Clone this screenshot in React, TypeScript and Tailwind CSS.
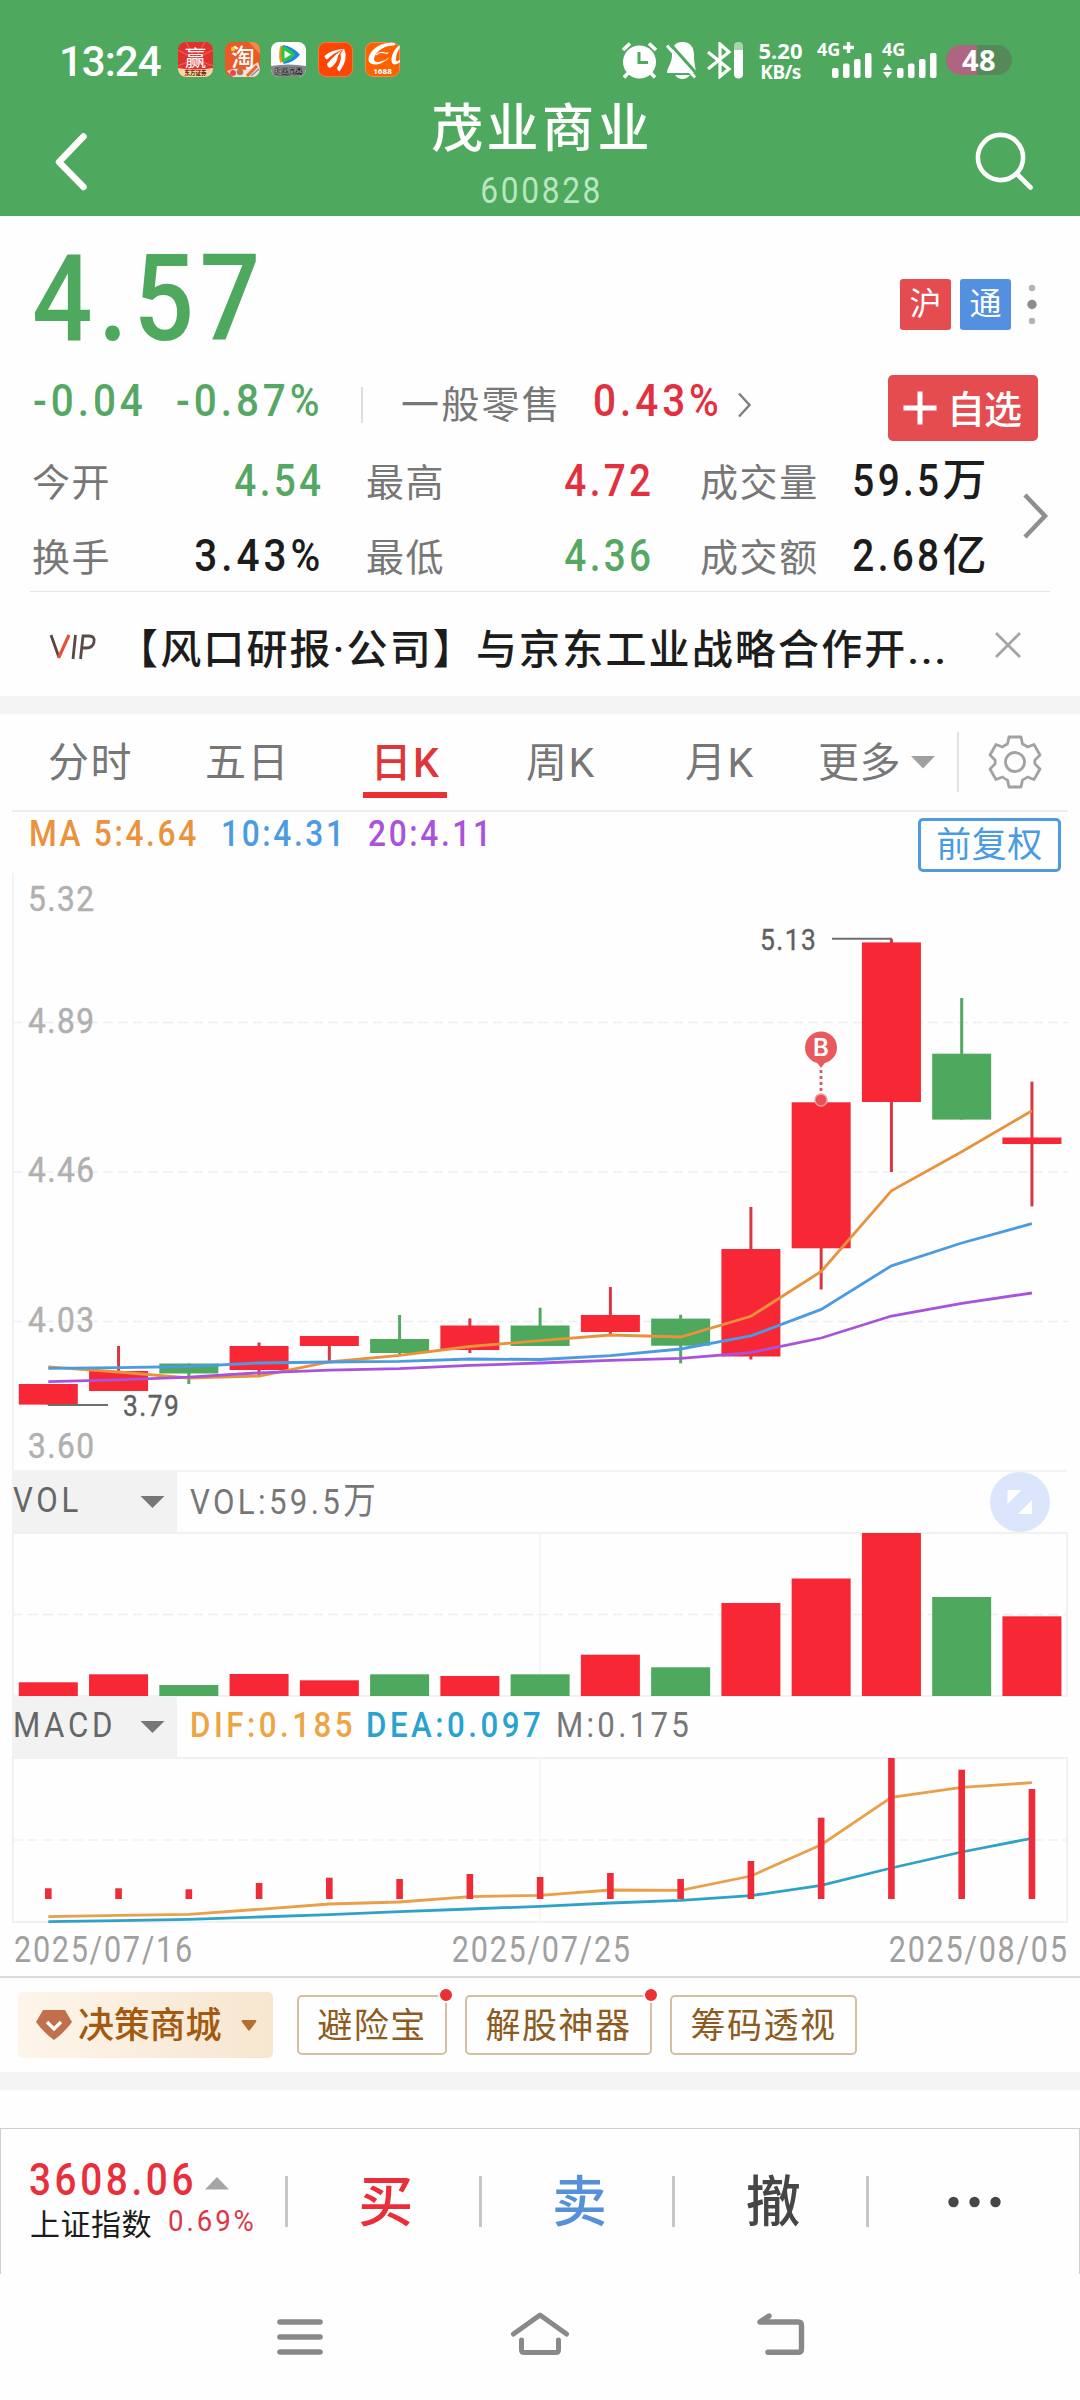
import React from "react";

const RED = "#f72735";
const GREEN = "#4ea95e";
const UI_FONT = "font-['Roboto','Noto_Sans_CJK_SC',sans-serif]";

type Candle = { up: boolean; top: number; bottom: number; high?: number; low?: number; vol: number };

// Pixel levels in chart space, one entry per trading day.
const candles: Candle[] = [
  { up: true, top: 1384, bottom: 1404.6, vol: 1682.3 },
  { up: true, top: 1371, bottom: 1391, high: 1346, vol: 1674.3 },
  { up: false, top: 1363.5, bottom: 1373.5, low: 1384, vol: 1685 },
  { up: true, top: 1346, bottom: 1370, high: 1342.5, low: 1377, vol: 1674 },
  { up: true, top: 1336, bottom: 1346, low: 1361, vol: 1680.3 },
  { up: false, top: 1339, bottom: 1353, high: 1315, low: 1355, vol: 1674.3 },
  { up: true, top: 1325.5, bottom: 1350, high: 1318.4, low: 1353, vol: 1676 },
  { up: false, top: 1325.5, bottom: 1346, high: 1307.7, vol: 1674.3 },
  { up: true, top: 1315, bottom: 1332, high: 1287, low: 1334, vol: 1654.7 },
  { up: false, top: 1318.6, bottom: 1345.7, high: 1314.8, low: 1363.4, vol: 1667.3 },
  { up: true, top: 1249, bottom: 1356.5, high: 1207, low: 1359.5, vol: 1603 },
  { up: true, top: 1102.3, bottom: 1248.3, low: 1289.5, vol: 1578.5 },
  { up: true, top: 942.4, bottom: 1102, high: 939, low: 1172, vol: 1533 },
  { up: false, top: 1053.7, bottom: 1119.6, high: 998, vol: 1597 },
  { up: true, top: 1137.5, bottom: 1144, high: 1081.7, low: 1206.4, vol: 1616.3 },
];
const ma5 = [1366.9, 1372, 1378, 1376, 1362, 1355.4, 1346.5, 1340.6, 1335, 1337, 1316.3, 1271.5, 1190.8, 1151.7, 1110.8];
const ma10 = [1368.4, 1367.6, 1366.5, 1363, 1362, 1361.3, 1359, 1359.5, 1355.7, 1349, 1335.8, 1309.4, 1265.8, 1243, 1223.7];
const ma20 = [1381.7, 1379.8, 1377.2, 1372.8, 1370.2, 1368.7, 1365.4, 1363, 1360.3, 1358.4, 1352.6, 1338, 1316, 1303.3, 1293];
const macdTops = [1888.3, 1888.3, 1889.3, 1883, 1877.7, 1879, 1874, 1877, 1873, 1879, 1861, 1817.7, 1758, 1769.7, 1789];
const dif = [1916.7, 1915.3, 1914.3, 1909.3, 1904, 1902, 1896.7, 1895.3, 1890, 1890.3, 1876, 1844.7, 1797.3, 1787.3, 1782.7];
const dea = [1921.7, 1920.7, 1919.3, 1917, 1914.7, 1911.7, 1909, 1906.3, 1903, 1900.3, 1895.7, 1885.3, 1868, 1852, 1838.3];

const cx = (i: number) => 48.3 + i * 70.26;
const line = (ys: number[]) => ys.map((y, i) => `${cx(i).toFixed(1)},${y}`).join(" ");

// Narrow, widely spaced figures used for every quote value.
function Num({ children, className = "origin-left" }: { children: React.ReactNode; className?: string }) {
  return <span className={`inline-block scale-x-[0.88] ${className}`}>{children}</span>;
}

// Percentages and signed changes are set a little wider.
function Pct({ children, className = "origin-left" }: { children: React.ReactNode; className?: string }) {
  return <span className={`inline-block scale-x-[0.92] tracking-[4.300px] ${className}`}>{children}</span>;
}

function StatusBar() {
  return (
    <div className="flex h-[78px] items-start pt-[42px] text-white">
      <div className="ml-[59px] w-[119px] text-[42px] font-medium leading-[40px] tracking-[-1px]">13:24</div>
      <div className="flex w-[443px] gap-[11.7px]">
        <svg width="35" height="35" viewBox="0 0 35 35">
          <rect width="35" height="35" rx="8" fill="#e2302f" />
          <path d="M0 8 L17 17 L8 0 M27 0 L17 17 L35 8 M0 24 L17 17 L35 24" stroke="#ef5c52" strokeWidth="1.200" fill="none" />
          <path d="M0 26 Q17 29 35 26 V27 A8 8 0 0 1 27 35 H8 A8 8 0 0 1 0 27Z" fill="#f8d6a8" />
          <text x="17.500" y="23.500" textAnchor="middle" fontSize="21.500" fontFamily="Noto Sans CJK SC" fill="#fff">赢</text>
          <text x="17.500" y="33.300" textAnchor="middle" fontSize="5.500" fontWeight="900" fontFamily="Noto Sans CJK SC" fill="#7a2a10">东方证券</text>
        </svg>
        <svg className="overflow-visible" width="35" height="35" viewBox="0 0 35 35">
          <rect width="35" height="35" rx="8" fill="#ea5a26" />
          <path d="M24 0 H27 A8 8 0 0 1 35 8 V12 Z" fill="#f08a4c" />
          <path d="M2 29 Q10 25 20 28 L33 20 L35 27 A8 8 0 0 1 27 35 H8 Z" fill="#f6ddd0" />
          <circle cx="8" cy="31" r="3" fill="#e84460" />
          <circle cx="15" cy="30" r="3.200" fill="#b4744c" />
          <path d="M22 34 L32 24" stroke="#e8662c" strokeWidth="3" />
          <path d="M26 34 L34 27" stroke="#6d8fd0" strokeWidth="1.500" />
          <text x="18" y="23.500" textAnchor="middle" fontSize="23.500" fontWeight="500" fontFamily="Noto Sans CJK SC" fill="#fff">淘</text>
          <circle cx="8" cy="7" r="2.200" fill="#ffc93a" />
        </svg>
        <svg width="35" height="35" viewBox="0 0 35 35">
          <rect width="35" height="35" rx="8" fill="#fff" />
          <path d="M0 24 Q17 21 35 24 V27 A8 8 0 0 1 27 35 H8 A8 8 0 0 1 0 27Z" fill="#85898b" />
          <path d="M9.500 3.500 Q7 12 9 20.500 L15 20 L13 4Z" fill="#ff8a1e" />
          <path d="M12 3 Q21 4 29 12.500 Q24 20 12.500 22 Q10 13 12 3Z" fill="#1f86e8" />
          <path d="M11 4 Q19 6 24 12.500 Q20 18 12 20.500 Q9 12 11 4Z" fill="#27c840" />
          <path d="M13.500 8.500 L20 12.500 L13.500 16.500Z" fill="#fff" />
          <text x="17.500" y="32" textAnchor="middle" fontSize="7" fontWeight="900" fontFamily="Noto Sans CJK SC" fill="#fff" stroke="#161616" strokeWidth="0.500">扫黑风暴</text>
        </svg>
        <svg width="35" height="35" viewBox="0 0 35 35">
          <rect x="0.500" y="0.500" width="34" height="34" rx="7.500" fill="#fe4503" stroke="#f47a3c" />
          <path d="M26 7 Q12 8 6.500 14 Q6.500 17 9 17.800 Q15 11 26 7Z M26 7 Q17 12 9 22 Q9.500 25.500 12 26 Q19 22 20 14 Q22 9.500 26 7Z M26 6.500 Q31 17 21.500 29.500 Q19 28.500 19 26 Q24 19 22.500 12Z" fill="#fff" />
        </svg>
        <svg width="35" height="35" viewBox="0 0 35 35">
          <rect x="0.500" y="0.500" width="34" height="34" rx="7.500" fill="#ff6000" stroke="#f48a4c" />
          <path d="M20 1.500 Q12 3 7 9 Q3 14 3.500 18.500 Q5 23 12 22.500 Q19 21 25 15 Q20 19 14 20 Q9 20.500 9 17 Q10 10 20 5 Q25 3 29 3.500 Q32 2 29 1 Q25 0.500 20 1.500Z" fill="#fff" />
          <path d="M11 13 Q15 9 20 11 Q22 12 23 10.500" fill="none" stroke="#fff" strokeWidth="1.300" />
          <path d="M34.500 3 Q28 8 26.500 16 Q26 22 29.500 22.500 Q32 22.500 35 20 V18 Q32 20 31 18.500 Q30.500 12 34.800 6Z" fill="#fff" />
          <text x="17.500" y="32" textAnchor="middle" fontSize="8" fontWeight="900" fontFamily="Roboto" fill="#fff">1688</text>
        </svg>
      </div>
      <svg className="w-[38px] shrink-0" height="37" viewBox="0 0 38 37">
        <circle cx="18.500" cy="20" r="16.500" fill="#fff" />
        <path d="M2 8 L9 1.500 M35 8 L28 1.500 M3 35.500 L8 30 M34 35.500 L29 30" stroke="#fff" strokeWidth="3.500" />
        <path d="M18 10 V20.500 H27" fill="none" stroke={GREEN} strokeWidth="3" />
      </svg>
      <svg className="ml-[7px] w-[33px] shrink-0" height="37" viewBox="-1 0 33 37">
        <path d="M15.500 0 C7 0 5 6 5 13 C5 22 0 25 0 31 H29 C29 27 27 22 27 13 C27 6 24 0 15.500 0Z" fill="#fff" />
        <path d="M8 33 H23 Q20 37 15.500 37 Q11 37 8 33Z" fill="#fff" />
        <path d="M2 0.500 L33 35.500" stroke={GREEN} strokeWidth="3" />
        <path d="M0 3.500 L28 35.500" stroke="#fff" strokeWidth="3" />
      </svg>
      <svg className="ml-[8px] w-[37px] shrink-0" height="37" viewBox="0 0 37 37">
        <path d="M1 10 L22 27 L13 34.500 V2 L22 10 L1 27" fill="none" stroke="#fff" strokeWidth="3.200" />
        <rect x="27" y="0" width="9" height="36" rx="4" fill="#a5d5ac" />
        <path d="M27 8 H36 V32 A4 4 0 0 1 27 32Z" fill="#fff" />
      </svg>
      <div className="ml-[8px] w-[57px] text-center font-['Noto_Sans',sans-serif] font-bold">
        <div className="text-[22px] leading-[16px]">5.20</div>
        <div className="mt-[6px] text-[19px] leading-[17px] tracking-[-0.600px]">KB/s</div>
      </div>
      <svg className="ml-[9px] w-[120px] shrink-0 overflow-visible font-['Noto_Sans',sans-serif]" height="37" viewBox="0 0 120 37" fill="#fff">
        <text x="-1" y="13.500" fontSize="18" fontWeight="700">4G</text>
        <path d="M25 5.500 H36 M30.500 0 V11" stroke="#fff" strokeWidth="3.400" />
        <rect x="14" y="26" width="6.500" height="10" rx="2" />
        <rect x="25" y="21.500" width="6.500" height="14.500" rx="2" />
        <rect x="36" y="17" width="6.500" height="19" rx="2" />
        <rect x="47" y="11" width="6.500" height="25" rx="2" />
        <text x="64" y="13.500" fontSize="18" fontWeight="700">4G</text>
        <path d="M65 28 L69.500 22 L74 28Z M65 30 L69.500 36 L74 30Z" />
        <rect x="79" y="26" width="6.500" height="10" rx="2" />
        <rect x="90" y="21.500" width="6.500" height="14.500" rx="2" />
        <rect x="101" y="17" width="6.500" height="19" rx="2" />
        <rect x="112" y="11" width="6.500" height="25" rx="2" />
      </svg>
      <div className="ml-[8px] mt-[3px] h-[30px] w-[66px] shrink-0 rounded-full bg-linear-to-r from-[#ad6580] from-[47%] to-[#56895a] to-[47%] text-center font-['Noto_Sans',sans-serif] text-[29px] font-bold leading-[30px] tracking-[0.500px]">
        48
      </div>
    </div>
  );
}

function Header() {
  return (
    <header className="h-[216px] bg-[#4ea95e] text-white">
      <StatusBar />
      <div className="flex h-[138px] justify-between">
        <svg className="ml-[50px] mt-[50px]" width="60" height="68" viewBox="0 0 60 68">
          <path d="M33.500 8.500 L9 34 L33.500 59" fill="none" stroke="#fff" strokeWidth="6.500" strokeLinecap="round" strokeLinejoin="round" />
        </svg>
        <div className="flex w-[300px] flex-col items-center pt-[22px]">
          <div className="pl-[4px] text-[52px] font-medium leading-[60px] tracking-[3.400px]">茂业商业</div>
          <div className="mt-[11px] pl-[4px] text-[36px] leading-[40px] tracking-[3px] text-[#b9e6c0]">
            <span className="inline-block scale-x-[0.88]">600828</span>
          </div>
        </div>
        <svg className="mr-[34px] mt-[50px]" width="76" height="68" viewBox="-8 0 76 68">
          <circle cx="22.500" cy="29.500" r="22.600" fill="none" stroke="#fff" strokeWidth="4.600" />
          <path d="M39 46 L52.500 59.500" stroke="#fff" strokeWidth="4.600" strokeLinecap="round" />
        </svg>
      </div>
    </header>
  );
}

function Quote() {
  const label = "pt-[5px] text-[38px] tracking-[1.600px] text-[#777777]";
  const value = "pt-[3px] text-right text-[44px] font-medium tracking-[3.800px]";
  return (
    <section className="h-[376px]">
      <div className="flex h-[159px] justify-between">
        <div className="ml-[32px] pt-[7px] text-[121px] font-medium leading-[152px] tracking-[6.500px] text-[#4ea95e]">
          <Num>4.57</Num>
        </div>
        <div className="mr-[41px] flex gap-[9px] pt-[63px] text-[32px] leading-[51px] text-white">
          <div className="h-[51px] w-[51px] rounded-[3px] bg-[#e44c50] text-center">沪</div>
          <div className="h-[51px] w-[51px] rounded-[3px] bg-[#5390df] text-center">通</div>
          <svg className="ml-[7px]" width="12" height="51" viewBox="0 0 12 51">
            <circle cx="5" cy="9" r="3.200" fill="#b4b4b4" />
            <circle cx="5" cy="25.500" r="4.700" fill="#8c8c8c" />
            <circle cx="5" cy="42" r="3.200" fill="#b4b4b4" />
          </svg>
        </div>
      </div>
      <div className="flex h-[66px] items-start whitespace-nowrap text-[44px] font-medium leading-[52px] text-[#55a864]">
        <div className="ml-[33px] w-[143px]"><Pct>-0.04</Pct></div>
        <div className="w-[185px]"><Pct>-0.87%</Pct></div>
        <div className="mt-[12px] h-[36px] w-[2px] bg-[#dddddd]" />
        <div className="ml-[38px] w-[192px] pt-[4px] text-[38px] font-normal tracking-[2.200px] text-[#777777]">一般零售</div>
        <div className="w-[144px] text-[#e2303f]"><Pct>0.43%</Pct></div>
        <svg className="mt-[17px]" width="16" height="26" viewBox="0 0 16 26">
          <path d="M2 1.500 L12.500 13 L2 24.500" fill="none" stroke="#808080" strokeWidth="2.500" />
        </svg>
        <div className="ml-auto mr-[42px] flex h-[66px] w-[150px] items-center rounded-[5px] bg-[#e44c50] text-[38px] font-medium tracking-[-1px] text-white">
          <svg className="ml-[15px]" width="34" height="34" viewBox="0 0 34 34">
            <path d="M0.500 17 H33.500 M17 0.500 V33.500" stroke="#fff" strokeWidth="5" />
          </svg>
          <span className="ml-[10px] pt-[3px]">自选</span>
        </div>
      </div>
      <div className="flex h-[150px]">
        <div className="grid w-[1020px] shrink-0 grid-cols-[120px_172px_42px_120px_168px_46px_140px_146px] grid-rows-[75px_75px] whitespace-nowrap pl-[32px] leading-[75px]">
          <span className={label}>今开</span>
          <span className={`${value} text-[#55a864]`}><Num className="origin-right">4.54</Num></span>
          <i />
          <span className={label}>最高</span>
          <span className={`${value} text-[#e2303f]`}><Num className="origin-right">4.72</Num></span>
          <i />
          <span className={label}>成交量</span>
          <span className={`${value} text-[#1c1c1c]`}><Num className="origin-right">59.5</Num><span className="tracking-[0px]">万</span></span>
          <span className={label}>换手</span>
          <span className={`${value} text-[#1c1c1c]`}><Pct className="origin-right">3.43%</Pct></span>
          <i />
          <span className={label}>最低</span>
          <span className={`${value} text-[#55a864]`}><Num className="origin-right">4.36</Num></span>
          <i />
          <span className={label}>成交额</span>
          <span className={`${value} text-[#1c1c1c]`}><Num className="origin-right">2.68</Num><span className="tracking-[0px]">亿</span></span>
        </div>
        <svg className="mt-[50px]" width="30" height="50" viewBox="0 0 30 50">
          <path d="M5 4 L25 25 L5 46" fill="none" stroke="#8f8f8f" strokeWidth="4.500" />
        </svg>
      </div>
      <div className="mx-[30px] h-[1px] bg-[#e6e6e6]" />
    </section>
  );
}

function VipNews() {
  return (
    <div className="flex h-[104px] items-start whitespace-nowrap">
      <svg className="ml-[49px] mt-[42px]" width="48" height="26" viewBox="0 0 48 26" fill="none" strokeWidth="2.800">
        <path d="M2 1 L10 23.500" stroke="#5a4640" />
        <path d="M9.500 24 L20 1" stroke="#e0553a" strokeWidth="3.200" />
        <path d="M26.500 1 L24 25 M31.500 25 L34 2 H40 Q46 2 45 8 Q44 14 37 14 H33.500" stroke="#5a4a46" />
      </svg>
      <div className="ml-[20px] w-[859px] pt-[30px] text-[41px] font-medium leading-[56px] tracking-[2.150px] text-[#1c1c1c]">
        【风口研报·公司】与京东工业战略合作开...
      </div>
      <svg className="ml-[19px] mt-[40px]" width="26" height="26" viewBox="0 0 26 26">
        <path d="M1 1 L25 25 M25 1 L1 25" stroke="#a6a6a6" strokeWidth="2.800" />
      </svg>
    </div>
  );
}

function Tabs() {
  return (
    <div className="flex h-[96px] whitespace-nowrap text-[41px] leading-[98px] tracking-[1.500px] text-[#777777]">
      <div className="ml-[48px] w-[157px]">分时</div>
      <div className="w-[158px]">五日</div>
      <div className="flex w-[163px] flex-col text-[#e0363a]">
        <div className="h-[78px] w-[84px] pl-[1px] text-center font-medium">日K</div>
        <div className="h-[6px] w-[84px] bg-[#e93032]" />
      </div>
      <div className="w-[159px]">周K</div>
      <div className="w-[133px]">月K</div>
      <div className="w-[92px] tracking-[0.500px]">更多</div>
      <svg className="mt-[42px]" width="26" height="13" viewBox="0 0 26 13">
        <path d="M1 0 H25 L13 12.500Z" fill="#a0a0a0" />
      </svg>
      <div className="ml-[21px] mt-[18px] h-[60px] w-[2px] bg-[#e2e2e2]" />
      <svg className="ml-[29px] mt-[21px]" width="54" height="54" viewBox="0 0 54 54" fill="none" stroke="#a2a2a2" strokeWidth="2.800" strokeLinejoin="round">
        <path d="M21 2 H33 L34.500 9 Q37 10 39.500 12 L46 9.500 L52 20 L47 25 Q46.500 27 47 29 L52 34 L46 44.500 L39.500 42 Q37 44 34.500 45 L33 52 H21 L19.500 45 Q17 44 14.500 42 L8 44.500 L2 34 L7 29 Q7.500 27 7 25 L2 20 L8 9.500 L14.500 12 Q17 10 19.500 9Z" />
        <circle cx="27" cy="27" r="9.500" />
      </svg>
    </div>
  );
}

function MaLegend() {
  return (
    <div className="mx-[12px] flex h-[63px] items-start whitespace-nowrap border-t-2 border-[#eeeeee] text-[36px] font-medium leading-[45px] tracking-[3px]">
      <div className="ml-[17px] w-[192px] text-[#ea923c]"><Num>MA 5:4.64</Num></div>
      <div className="w-[147px] text-[#4b9be2]"><Num>10:4.31</Num></div>
      <div className="w-[200px] text-[#a953dc]"><Num>20:4.11</Num></div>
      <div className="ml-auto mr-[7px] mt-[6px] h-[54px] w-[143px] rounded-[5px] border-[3px] border-[#509be0] text-center text-[35px] font-normal leading-[49px] tracking-[0.500px] text-[#4b9be2]">
        前复权
      </div>
    </div>
  );
}

function CandleChart() {
  const labels: [string, number][] = [["5.32", 911], ["4.89", 1033], ["4.46", 1182], ["4.03", 1332], ["3.60", 1458]];
  return (
    <svg className="block" width="1080" height="599" viewBox="0 873 1080 599" fontFamily="Roboto">
      <path d="M13 873 V1471 H1067" fill="none" stroke="#f3f3f3" strokeWidth="2" />
      {[1022.5, 1172, 1321.5].map((y) => (
        <path key={y} d={`M13 ${y} H1068`} stroke="#eeeeee" strokeWidth="1.500" strokeDasharray="10 5" />
      ))}
      {labels.map(([t, y]) => (
        <text key={t} transform={`translate(28 ${y}) scale(0.88 1)`} fontSize="36" letterSpacing="1.600" fill="#b0b0b0" stroke="#b0b0b0" strokeWidth="0.500">{t}</text>
      ))}
      {candles.map((c, i) => (
        <g key={i} fill={c.up ? RED : GREEN}>
          <rect x={cx(i) - 1.5} y={c.high ?? c.top} width="3" height={(c.low ?? c.bottom) - (c.high ?? c.top)} fill={c.up ? "#d73844" : "#55a864"} />
          <rect x={cx(i) - 29.500} y={c.top} width="59" height={c.bottom - c.top} />
        </g>
      ))}
      <g fill="none" strokeWidth="2.800">
        <polyline points={line(ma5)} stroke="#e8933c" />
        <polyline points={line(ma10)} stroke="#4b9be2" />
        <polyline points={line(ma20)} stroke="#a953dc" />
      </g>
      <path d="M48 1405 H108 M832 938.800 H892" stroke="#6e6e6e" strokeWidth="2" />
      <g fontSize="30" fill="#606060" letterSpacing="1.700" stroke="#606060" strokeWidth="0.400">
        <text transform="translate(123 1416) scale(0.88 1)">3.79</text>
        <text transform="translate(760 949.500) scale(0.88 1)">5.13</text>
      </g>
      <path d="M815 1060 L821 1068 L827 1060Z" fill="#e85a5e" />
      <circle cx="821" cy="1047.500" r="16" fill="#e85a5e" />
      <text x="821" y="1056" fontSize="24" fontFamily="Inter" fontWeight="600" textAnchor="middle" fill="#fff">B</text>
      <path d="M821 1070 V1094" stroke="#e0585c" strokeWidth="2.800" strokeDasharray="3 3" />
      <circle cx="821" cy="1100" r="6" fill="#e85055" stroke="#f29a9c" strokeWidth="1.500" />
    </svg>
  );
}

function IndicatorName({ name }: { name: string }) {
  return (
    <div className="flex h-[60px] w-[165px] items-start bg-[#f2f2f2] text-[#666666]">
      <Num className="w-[128px] origin-left pl-[1px] leading-[56px] tracking-[4.200px]">{name}</Num>
      <svg className="mt-[24px]" width="25" height="12" viewBox="0 0 25 12">
        <path d="M0.500 0 H24.500 L12.500 12Z" fill="#777777" />
      </svg>
    </div>
  );
}

function VolumePanel() {
  return (
    <div>
      <div className="ml-[12px] mr-[30px] flex h-[60px] whitespace-nowrap text-[35.500px] tracking-[3.800px]">
        <IndicatorName name="VOL" />
        <Num className="ml-[13px] origin-left leading-[60px] text-[#777777]">VOL:59.5<span className="text-[37px]">万</span></Num>
        <svg className="ml-auto" width="60" height="60" viewBox="0 0 60 60">
          <circle cx="30" cy="30" r="30" fill="#dbe6fd" />
          <path d="M17.500 18 H31.500 L17.500 32Z M42 28 V42 H28Z" fill="#fff" />
        </svg>
      </div>
      <svg className="block" width="1080" height="165" viewBox="0 1532 1080 165">
        <path d="M13 1533 H1067 V1696 H13Z" fill="none" stroke="#f1f1f1" strokeWidth="2" />
        <path d="M540 1533 V1696" stroke="#f4f4f4" strokeWidth="1.500" />
        <path d="M13 1614.500 H1067" stroke="#eeeeee" strokeWidth="1.500" strokeDasharray="10 5" />
        {candles.map((c, i) => (
          <rect key={i} x={cx(i) - 29.500} y={c.vol} width="59" height={1696 - c.vol} fill={c.up ? RED : GREEN} />
        ))}
      </svg>
    </div>
  );
}

function MacdPanel() {
  return (
    <div>
      <div className="ml-[12px] flex h-[60px] whitespace-nowrap text-[35.500px] font-medium leading-[56px] tracking-[4px]">
        <div className="font-normal"><IndicatorName name="MACD" /></div>
        <div className="ml-[13px] w-[176px] text-[#eda442]"><Num>DIF:0.185</Num></div>
        <div className="w-[190px] text-[#28a3cf]"><Num>DEA:0.097</Num></div>
        <div className="font-normal tracking-[3.700px] text-[#777777]"><Num>M:0.175</Num></div>
      </div>
      <svg className="block" width="1080" height="167" viewBox="0 1757 1080 167">
        <path d="M13 1758 H1067 V1922 H13Z" fill="none" stroke="#f1f1f1" strokeWidth="2" />
        <path d="M540 1758 V1922" stroke="#f4f4f4" strokeWidth="1.500" />
        <path d="M13 1840 H1067" stroke="#f1f1f1" strokeWidth="1.500" strokeDasharray="10 5" />
        <polyline points={line(dif)} fill="none" stroke="#e8a04a" strokeWidth="2.800" />
        <polyline points={line(dea)} fill="none" stroke="#2fa2c8" strokeWidth="2.800" />
        {macdTops.map((y, i) => (
          <rect key={i} x={cx(i) - 3.300} y={y} width="6.600" height={1899 - y} fill="#ee2b38" />
        ))}
      </svg>
      <div className="flex h-[52px] justify-between pl-[14px] pr-[11px] text-[36px] leading-[52px] tracking-[2px] text-[#a0a0a0]">
        <span className="inline-block origin-left scale-x-[0.85]">2025/07/16</span>
        <span className="inline-block scale-x-[0.85]">2025/07/25</span>
        <span className="inline-block origin-right scale-x-[0.85]">2025/08/05</span>
      </div>
    </div>
  );
}

function Chip({ text, dot, className }: { text: string; dot?: boolean; className: string }) {
  return (
    <div className={`relative mt-[17px] h-[60px] rounded-[5px] border-2 border-[#d3c0a4] text-center text-[35px] leading-[59px] tracking-[1.500px] text-[#8d5b20] ${className}`}>
      {text}
      {dot && <i className="absolute -right-[9px] -top-[10px] h-[16px] w-[16px] rounded-full border-2 border-white bg-[#e93032]" />}
    </div>
  );
}

function ToolRow() {
  return (
    <div className="flex h-[96px] border-t-2 border-[#dadada] whitespace-nowrap">
      <div className="ml-[18px] mt-[14px] flex h-[66px] w-[255px] items-center rounded-[5px] bg-linear-to-r from-[#fdf5eb] to-[#f7e6cf] text-[#a3590f]">
        <svg className="ml-[18px]" width="36" height="30" viewBox="0 0 36 30">
          <path d="M7 0 H29 L36 12 Q28 23 18 30 Q8 23 0 12Z" fill="#c0714c" />
          <path d="M11 12 L18 19 L25 12" fill="none" stroke="#fff" strokeWidth="3.200" />
        </svg>
        <span className="ml-[6px] w-[163px] pt-[2px] text-[36px] font-medium tracking-[-0.200px]">决策商城</span>
        <svg width="16" height="11" viewBox="0 0 16 11">
          <path d="M1.500 0 H14.500 Q16 0.500 15 2 L9 10 Q8 11.500 7 10 L1 2 Q0 0.500 1.500 0Z" fill="#b4702f" />
        </svg>
      </div>
      <Chip className="ml-[24px] w-[150px]" text="避险宝" dot />
      <Chip className="ml-[18px] w-[187px]" text="解股神器" dot />
      <Chip className="ml-[18px] w-[187px]" text="筹码透视" />
    </div>
  );
}

function TradeBar() {
  const action = "w-[190.700px] pl-[5px] text-center text-[55px] font-medium leading-[72px]";
  const rule = <div className="mt-[10px] h-[51px] w-[3px] bg-[#c6c6c6]" />;
  return (
    <div className="flex h-[146px] border border-b-0 border-[#cfcfcf] pt-[37px]">
      <div className="flex w-[284px] flex-col whitespace-nowrap">
        <div className="flex h-[35px] pl-[28px] text-[44px] font-medium leading-[28px] tracking-[4.100px] text-[#e8303c]">
          <div className="h-[35px] w-[176px]"><Num>3608.06</Num></div>
          <svg className="mt-[11px]" width="24" height="13" viewBox="0 0 24 13">
            <path d="M0 12.500 L12 0 L24 12.500Z" fill="#a5a5a5" />
          </svg>
        </div>
        <div className="flex pl-[29px] text-[30px] leading-[40px] tracking-[0.500px]">
          <span className="w-[138px] pt-[4px] text-[#1c1c1c]">上证指数</span>
          <span className="inline-block origin-left scale-x-[0.92] tracking-[3.200px] text-[#dc3644]">0.69%</span>
        </div>
      </div>
      {rule}
      <div className={`${action} text-[#ea2d38]`}>买</div>
      {rule}
      <div className={`${action} text-[#5590d8]`}>卖</div>
      {rule}
      <div className={`${action} text-[#464646]`}>撤</div>
      {rule}
      <svg className="ml-[77px] mt-[29px]" width="60" height="14" viewBox="0 0 60 14" fill="#464646">
        <circle cx="7.500" cy="7" r="5.200" />
        <circle cx="28.500" cy="7" r="5.200" />
        <circle cx="49.500" cy="7" r="5.200" />
      </svg>
    </div>
  );
}

function SystemNav() {
  return (
    <nav className="flex h-[126px] justify-center gap-[180px] pt-[36px]">
      <svg width="60" height="50" viewBox="270 2310 60 50" fill="none" stroke="#898989" strokeWidth="5.600" strokeLinecap="round">
        <path d="M280 2322 H320 M280 2337 H320 M280 2352 H320" />
      </svg>
      <svg width="60" height="50" viewBox="510 2310 60 50" fill="none" stroke="#898989" strokeWidth="5" strokeLinecap="round" strokeLinejoin="round">
        <path d="M513.500 2334 L540 2315 L566.500 2334 M521.500 2340 V2350 Q521.500 2352.500 524 2352.500 H556 Q558.500 2352.500 558.500 2350 V2340" />
      </svg>
      <svg width="60" height="50" viewBox="750 2310 60 50" fill="none" stroke="#898989" strokeWidth="5.400" strokeLinecap="round" strokeLinejoin="round">
        <path d="M769 2316 L760 2322 H798 Q801.500 2322 801.500 2325.500 V2349 Q801.500 2352.300 798 2352.300 H768" />
      </svg>
    </nav>
  );
}

export default function App() {
  return (
    <div className={`h-[2400px] w-[1080px] overflow-hidden bg-[#fefefe] ${UI_FONT}`}>
      <Header />
      <Quote />
      <VipNews />
      <div className="h-[18px] bg-[#f4f4f4]" />
      <Tabs />
      <MaLegend />
      <CandleChart />
      <VolumePanel />
      <MacdPanel />
      <ToolRow />
      <div className="h-[18px] bg-[#f4f4f4]" />
      <div className="h-[38px]" />
      <TradeBar />
      <SystemNav />
    </div>
  );
}
